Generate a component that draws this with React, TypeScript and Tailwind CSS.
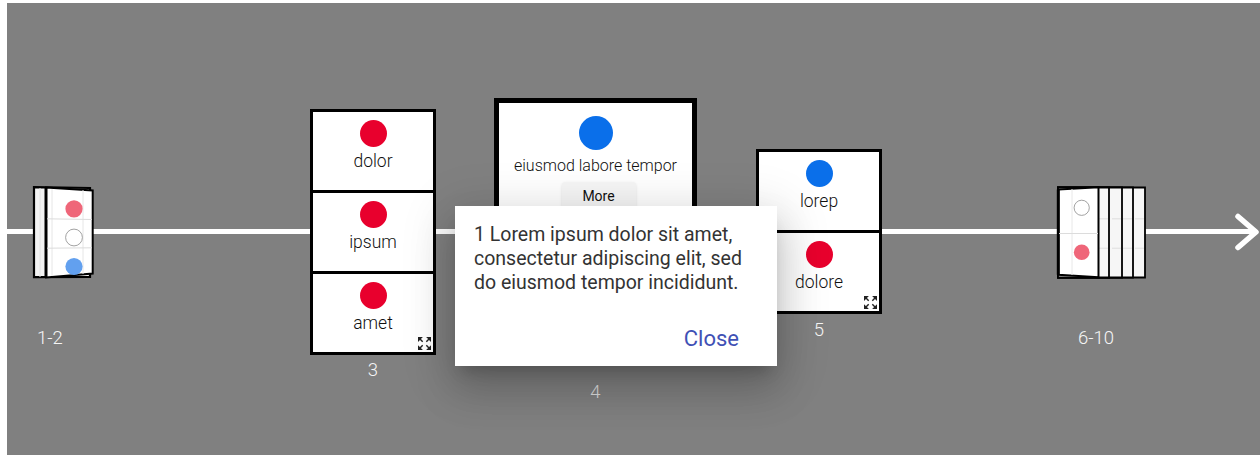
import React from 'react';

const ExpandIcon: React.FC = () => (
  <svg width="13" height="13" viewBox="0 0 12 12" className="absolute bottom-[2px] right-[2px]">
    <g fill="#222" stroke="#222" strokeWidth="1.3">
      <polygon points="0,0 4.5,0 0,4.5" strokeWidth="0" />
      <line x1="1" y1="1" x2="4.3" y2="4.3" />
      <polygon points="12,0 7.5,0 12,4.5" strokeWidth="0" />
      <line x1="11" y1="1" x2="7.7" y2="4.3" />
      <polygon points="0,12 0,7.5 4.5,12" strokeWidth="0" />
      <line x1="1" y1="11" x2="4.3" y2="7.7" />
      <polygon points="12,12 12,7.5 7.5,12" strokeWidth="0" />
      <line x1="11" y1="11" x2="7.7" y2="7.7" />
    </g>
  </svg>
);

interface CellProps {
  color: 'red' | 'blue';
  label: string;
  expand?: boolean;
}

const Cell: React.FC<CellProps> = ({ color, label, expand }) => (
  <div className="relative flex h-[78px] flex-col items-center bg-white pt-[8px]">
    <div className={color === 'red' ? 'h-[27px] w-[27px] rounded-full bg-[#e8002d]' : 'h-[27px] w-[27px] rounded-full bg-[#0a6fea]'} />
    <div className="mt-[4px] text-[17.5px] font-light leading-[21px] text-[#111]">{label}</div>
    {expand && <ExpandIcon />}
  </div>
);

const Divider = () => <div className="h-[3px] bg-black" />;

const LeftStack = () => (
  <svg width="70" height="96" viewBox="0 0 70 96">
    <polygon points="4,3.2 60,4 60,93 4,93.2" fill="#f3f3f3" stroke="#000" strokeWidth="2.2" />
    <line x1="10" y1="4" x2="10" y2="93" stroke="#e2e2e2" strokeWidth="1" />
    <polygon points="16,3.5 62.7,6.5 62.7,89.5 16,93.5" fill="#fff" stroke="#000" strokeWidth="2" />
    <line x1="16" y1="3.5" x2="16" y2="93.5" stroke="#000" strokeWidth="3" />
    <line x1="22" y1="5" x2="22" y2="92" stroke="#e6e6e6" strokeWidth="1" />
    <line x1="53" y1="6" x2="53" y2="90" stroke="#e6e6e6" strokeWidth="1" />
    <line x1="17" y1="34.8" x2="62" y2="35.5" stroke="#dcdcdc" strokeWidth="1" />
    <line x1="17" y1="64.2" x2="62" y2="63.8" stroke="#dcdcdc" strokeWidth="1" />
    <circle cx="44" cy="24.8" r="8.6" fill="#ef6679" />
    <circle cx="44" cy="53.5" r="8.4" fill="#fff" stroke="#8a8a8a" strokeWidth="0.8" />
    <circle cx="44" cy="82.5" r="8.6" fill="#62a0ef" />
  </svg>
);

const RightStack = () => (
  <svg width="96" height="96" viewBox="0 0 96 96">
    {[91, 79, 68, 55].map((r) => (
      <g key={r}>
        <polygon points={`4,3.5 ${r},3.5 ${r},93.5 4,93.5`} fill="#f6f6f6" stroke="#000" strokeWidth="1.8" />
        <line x1={r - 10} y1="34.8" x2={r - 1} y2="34.8" stroke="#dedede" strokeWidth="1" />
        <line x1={r - 10} y1="64.2" x2={r - 1} y2="64.2" stroke="#dedede" strokeWidth="1" />
      </g>
    ))}
    <polygon points="4.3,5.5 44.5,3.2 44.5,93.2 4.3,90.8" fill="#fff" stroke="#000" strokeWidth="2" />
    <line x1="4.3" y1="5.5" x2="4.3" y2="90.8" stroke="#000" strokeWidth="3" />
    <line x1="18" y1="5" x2="18" y2="91" stroke="#e8e8e8" strokeWidth="1" />
    <line x1="5" y1="49.5" x2="44" y2="49.5" stroke="#dcdcdc" strokeWidth="1" />
    <circle cx="27.7" cy="23.8" r="7.6" fill="#fff" stroke="#8a8a8a" strokeWidth="0.8" />
    <circle cx="27.7" cy="68.2" r="7.8" fill="#ef6679" />
  </svg>
);

export default function App() {
  return (
    <div className="h-[455px] w-[1260px] bg-white pl-[7px] pt-[3px] font-['Roboto',sans-serif]">
      <div className="relative h-[452px] w-[1253px] overflow-hidden bg-[#808080]">
        <div className="grid h-[452px] pt-[5px]">
          {/* timeline axis */}
          <div className="col-start-1 row-start-1 flex items-center self-center">
            <div className="h-[5px] flex-1 bg-white" />
            <svg width="30" height="38" viewBox="0 0 30 38" className="-ml-[26px]">
              <polyline points="8,3.5 26,19 8,34.5" fill="none" stroke="#fff" strokeWidth="5.5" strokeLinecap="round" strokeLinejoin="round" />
            </svg>
          </div>

          {/* items */}
          <div className="col-start-1 row-start-1 flex items-center self-center pl-[23px]">
            <div className="flex w-[70px] flex-col">
              <div className="h-[68px]" />
              <LeftStack />
              <div className="flex h-[68px] items-end pl-[7px] text-[18.5px] font-light leading-[20px] text-[#f5f5f5]">1-2</div>
            </div>

            <div className="ml-[210px] flex flex-col items-center">
              <div className="h-[25px]" />
              <div className="w-[126px] border-[3px] border-black bg-white">
                <Cell color="red" label="dolor" />
                <Divider />
                <Cell color="red" label="ipsum" />
                <Divider />
                <Cell color="red" label="amet" expand />
              </div>
              <div className="flex h-[25px] items-end text-[18.5px] font-light leading-[20px] text-[#f5f5f5]">3</div>
            </div>

            <div className="ml-[58px] flex flex-col items-center">
              <div className="h-[37px]" />
              <div className="h-[267px] w-[203px] border-[5px] border-black bg-white">
                <div className="flex flex-col items-center pt-[13px]">
                  <div className="h-[34px] w-[34px] rounded-full bg-[#0a6fea]" />
                  <div className="mt-[6px] text-[16px] font-light leading-[20px] text-[#111]">eiusmod labore tempor</div>
                  <button className="ml-[6px] mt-[6px] h-[28px] w-[74px] rounded-[4px] bg-[#f6f6f6] text-[14px] text-[#111] shadow-[0_1px_3px_rgba(0,0,0,0.12)]">
                    More
                  </button>
                </div>
              </div>
              <div className="flex h-[37px] items-end text-[18.5px] font-light leading-[20px] text-[#dedede]">4</div>
            </div>

            <div className="ml-[59px] flex flex-col items-center">
              <div className="h-[26px]" />
              <div className="w-[126px] border-[3px] border-black bg-white">
                <Cell color="blue" label="lorep" />
                <Divider />
                <Cell color="red" label="dolore" expand />
              </div>
              <div className="flex h-[26px] items-end text-[18.5px] font-light leading-[20px] text-[#f5f5f5]">5</div>
            </div>

            <div className="ml-[172px] flex w-[96px] flex-col">
              <div className="h-[68px]" />
              <RightStack />
              <div className="flex h-[68px] items-end pl-[24px] text-[18.5px] font-light leading-[20px] text-[#f5f5f5]">6-10</div>
            </div>
          </div>
        </div>

        {/* dialog */}
        <div className="absolute left-[448px] top-[203px] flex h-[160px] w-[322px] flex-col justify-between bg-white shadow-[0_11px_15px_-7px_rgba(0,0,0,0.2),0_24px_38px_3px_rgba(0,0,0,0.14),0_9px_46px_8px_rgba(0,0,0,0.12)]">
          <p className="px-[19px] pt-[17px] text-[19.5px] leading-[24px] text-[#333]">
            1 Lorem ipsum dolor sit amet, consectetur adipiscing elit, sed do eiusmod tempor incididunt.
          </p>
          <div className="flex justify-end pb-[14px] pr-[30px]">
            <button className="h-[26px] px-[8px] text-[22px] leading-[26px] text-[#3f51b5]">Close</button>
          </div>
        </div>
      </div>
    </div>
  );
}
